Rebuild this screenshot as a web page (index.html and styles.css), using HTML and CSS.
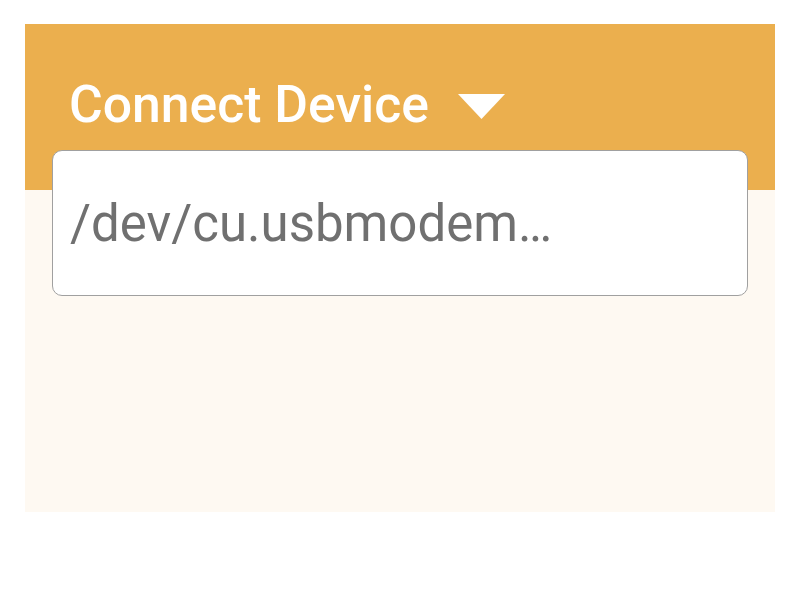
FILE: index.html
```html
<!DOCTYPE html>
<html>
<head>
<meta charset="utf-8">
<link rel="stylesheet" href="styles.css">
</head>
<body>
<div class="panel">
  <div class="title-row">
    <span class="title">Connect Device</span>
    <svg class="caret" width="47" height="25" viewBox="0 0 47 25"><polygon points="0,0 47,0 23.5,25" fill="#ffffff"/></svg>
  </div>
  <div class="card">
    <span class="device">/dev/cu.usbmodem…</span>
  </div>
</div>
</body>
</html>
```
FILE: styles.css
```css
html, body {
  margin: 0;
  padding: 0;
  background: #ffffff;
}
body {
  padding: 24px 25px;
  font-family: Roboto, "Liberation Sans", sans-serif;
}
.panel {
  width: 750px;
  height: 488px;
  box-sizing: border-box;
  background: linear-gradient(#ebaf4e 0, #ebaf4e 166px, #fef9f2 166px);
  padding: 55px 27px 0 27px;
}
.title-row {
  display: flex;
  align-items: flex-start;
  padding-left: 17px;
  height: 52px;
}
.title {
  color: #ffffff;
  font-size: 51.7px;
  font-weight: 500;
  line-height: 52px;
}
.caret {
  margin-left: 29px;
  margin-top: 15px;
}
.card {
  margin-top: 19px;
  height: 146px;
  box-sizing: border-box;
  background: #ffffff;
  border: 1px solid #a0a0a0;
  border-radius: 10px;
  padding: 47px 16px 0 17px;
}
.device {
  display: block;
  color: #707070;
  font-size: 51px;
  line-height: 51px;
  white-space: nowrap;
}
```
